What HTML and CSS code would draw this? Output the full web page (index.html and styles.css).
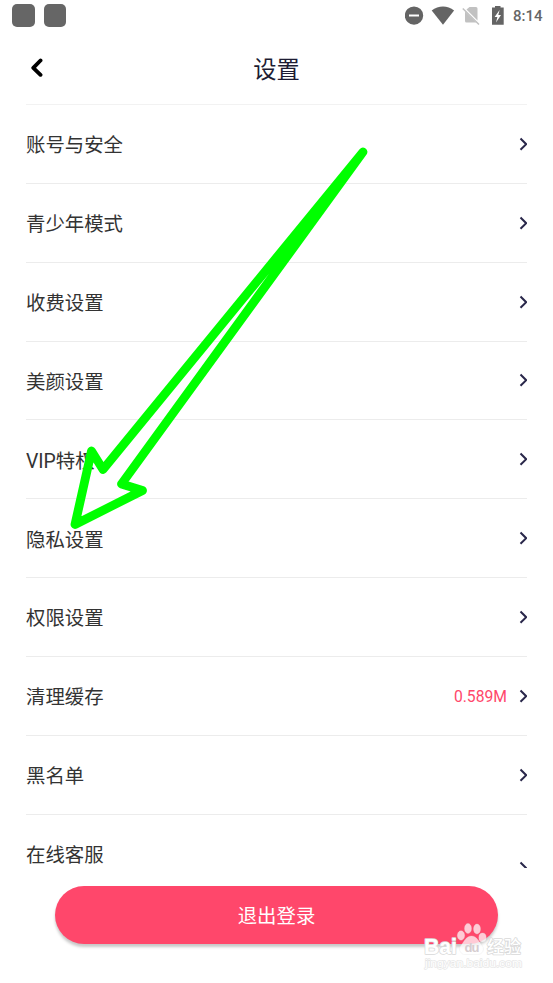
FILE: index.html
```html
<!DOCTYPE html>
<html lang="zh-CN">
<head>
<meta charset="utf-8">
<title>设置</title>
<link rel="stylesheet" href="styles.css">
</head>
<body>
<svg class="defs" width="0" height="0" aria-hidden="true">
  <symbol id="chevron" viewBox="0 0 10 14"><path d="M1.5 1.5 7.2 7.2 1.5 12.7" fill="none" stroke="#29274a" stroke-width="2"/></symbol>
</svg>
<div class="screen">
  <div class="statusbar">
    <i class="notice"></i><i class="notice"></i>
    <svg class="status-icons" width="104" height="24" viewBox="0 0 104 24">
      <circle cx="9" cy="11.6" r="9.2" fill="#646464"/><path d="M4 11.5h10" stroke="#fff" stroke-width="2"/>
      <path d="M26.7 6.5C33.500 1.100 42.500 1.100 49.100 6.500L38 20.700Z" fill="#646464"/>
      <path d="M64.500 3H71Q72.500 3 72.500 4.500V16.500L61.500 5.500Z" fill="#c1c1c1"/><path d="M60 7.500 71.300 18.500H61.500Q60 18.500 60 17Z" fill="#c1c1c1"/><path d="M57.800 4.500 74 20.500" stroke="#c1c1c1" stroke-width="1.500"/>
      <path d="M87 3.500h3V2h5.500v1.500h3.200v17.200H87z" fill="#646464"/><path d="M94.600 6 89.600 13h2.800L91 18.500l5-7.500h-2.700Z" fill="#fff"/>
    </svg>
    <span class="clock">8:14</span>
  </div>
  <header class="header">
    <svg width="14" height="20" viewBox="0 0 14 20"><path d="M10.500 2.500 3.300 9.800 10.500 16.800" fill="none" stroke="#000" stroke-width="3.900" stroke-linecap="round" stroke-linejoin="round"/></svg>
    <h1>设置</h1>
  </header>
  <main class="list">
    <div class="row"><span>账号与安全</span><svg class="chevron"><use href="#chevron"/></svg></div>
    <div class="row"><span>青少年模式</span><svg class="chevron"><use href="#chevron"/></svg></div>
    <div class="row"><span>收费设置</span><svg class="chevron"><use href="#chevron"/></svg></div>
    <div class="row"><span>美颜设置</span><svg class="chevron"><use href="#chevron"/></svg></div>
    <div class="row"><span>VIP特权</span><svg class="chevron"><use href="#chevron"/></svg></div>
    <div class="row"><span>隐私设置</span><svg class="chevron"><use href="#chevron"/></svg></div>
    <div class="row"><span>权限设置</span><svg class="chevron"><use href="#chevron"/></svg></div>
    <div class="row"><span>清理缓存</span><em>0.589M</em><svg class="chevron"><use href="#chevron"/></svg></div>
    <div class="row"><span>黑名单</span><svg class="chevron"><use href="#chevron"/></svg></div>
    <div class="row support"><span>在线客服</span><svg class="chevron"><use href="#chevron"/></svg></div>
  </main>
  <button class="logout">退出登录</button>
  <svg class="arrow" viewBox="0 0 553 983"><path d="M363 152 103 469.500 91.500 451 75 524.500 142.500 490.500 121.500 484Z" fill="none" stroke="#0f0" stroke-width="8.800" stroke-linejoin="round"/></svg>
  <svg class="watermark" width="110" height="56" viewBox="0 0 110 56">
    <g class="wm-mark">
      <ellipse cx="40" cy="17.500" rx="3.700" ry="4.700"/><ellipse cx="47" cy="10.500" rx="3.500" ry="5"/><ellipse cx="56" cy="11" rx="3.500" ry="5"/><ellipse cx="61.500" cy="19.500" rx="3.700" ry="4.500"/>
      <path d="M50.500 18C45 18 43 24 39.500 28C37 32 40 36.500 44 36.500H57C61 36.500 64 32 61.500 28C58 24 56 18 50.500 18Z"/>
    </g>
    <g class="wm-text">
      <text class="wm-bai" x="3" y="36" font-size="22" textLength="33" lengthAdjust="spacingAndGlyphs">Bai</text>
      <text class="wm-du" x="43.500" y="34" font-size="13" textLength="15">du</text>
      <text x="66" y="35" font-size="17" textLength="34">经验</text>
      <text class="wm-url" x="4" y="49" font-size="11" textLength="97" lengthAdjust="spacingAndGlyphs">jingyan.baidu.com</text>
    </g>
  </svg>
</div>
</body>
</html>
```
FILE: styles.css
```css
* { box-sizing: border-box; }
body { margin: 0; background: #fff; font-family: Roboto, "Noto Sans CJK SC", sans-serif; }
.defs { position: absolute; }
.screen { position: relative; width: 553px; height: 983px; overflow: hidden; display: flex; flex-direction: column; }
.statusbar { height: 32px; flex: none; display: flex; align-items: flex-start; padding: 4px 10px 0 12px; }
.notice { width: 22.500px; height: 22.500px; margin-right: 9px; border-radius: 5px; background: #666; }
.status-icons { margin-left: auto; }
.clock { width: 30px; margin-left: 4px; font-size: 15px; font-weight: 500; line-height: 25px; color: #666; white-space: nowrap; }
.header { height: 72px; flex: none; display: grid; grid-template-columns: 27px 1fr 27px; align-items: center; padding: 0 27px; }
.header h1 { margin: 3px 0 0; font-size: 23.300px; font-weight: 400; line-height: 34px; color: #1d1c33; text-align: center; }
.header svg { margin: -1px 0 0 2.500px; }
.list { height: 764px; flex: none; margin: 0 26px; overflow: hidden; border-top: 1px solid #f2f2f2; }
.row { height: 78.850px; display: flex; align-items: center; border-bottom: 1px solid #ececec; font-size: 19.400px; color: #333; }
.row em { margin-left: auto; margin-right: 11.500px; padding-top: 1px; font-size: 15.700px; font-style: normal; color: #ff476b; }
.chevron { width: 10px; height: 14px; margin-left: auto; margin-right: -1.500px; flex: none; }
.row em + .chevron { margin-left: 0; }
.support .chevron { transform: translateY(14px); }
.logout { flex: none; width: 443px; height: 58px; margin: 18px 0 0 55px; padding: 3px 0 0; border: 0; border-radius: 29px; background: #ff476b; color: #fff; font: 400 19.400px/55px Roboto, "Noto Sans CJK SC", sans-serif; box-shadow: 0 3px 3px rgba(0,0,0,.22); }
.arrow { position: absolute; inset: 0; width: 553px; height: 983px; pointer-events: none; }
.watermark { position: absolute; left: 421px; top: 918px; }
.wm-mark { fill: #fff; fill-opacity: .72; stroke: #ddd; stroke-opacity: .35; stroke-width: .8; }
.wm-text { font-family: "Liberation Sans", "Noto Sans CJK SC", sans-serif; font-weight: 500; fill: #fff; stroke: #d9d9d9; stroke-width: 1.600; stroke-linejoin: round; paint-order: stroke; }
.wm-bai { font-weight: 700; }
.wm-du { font-weight: 700; fill: #d6cdd0; stroke: none; }
.wm-url { font-weight: 400; stroke-width: 1.300; stroke: #e6e6e6; }
```
